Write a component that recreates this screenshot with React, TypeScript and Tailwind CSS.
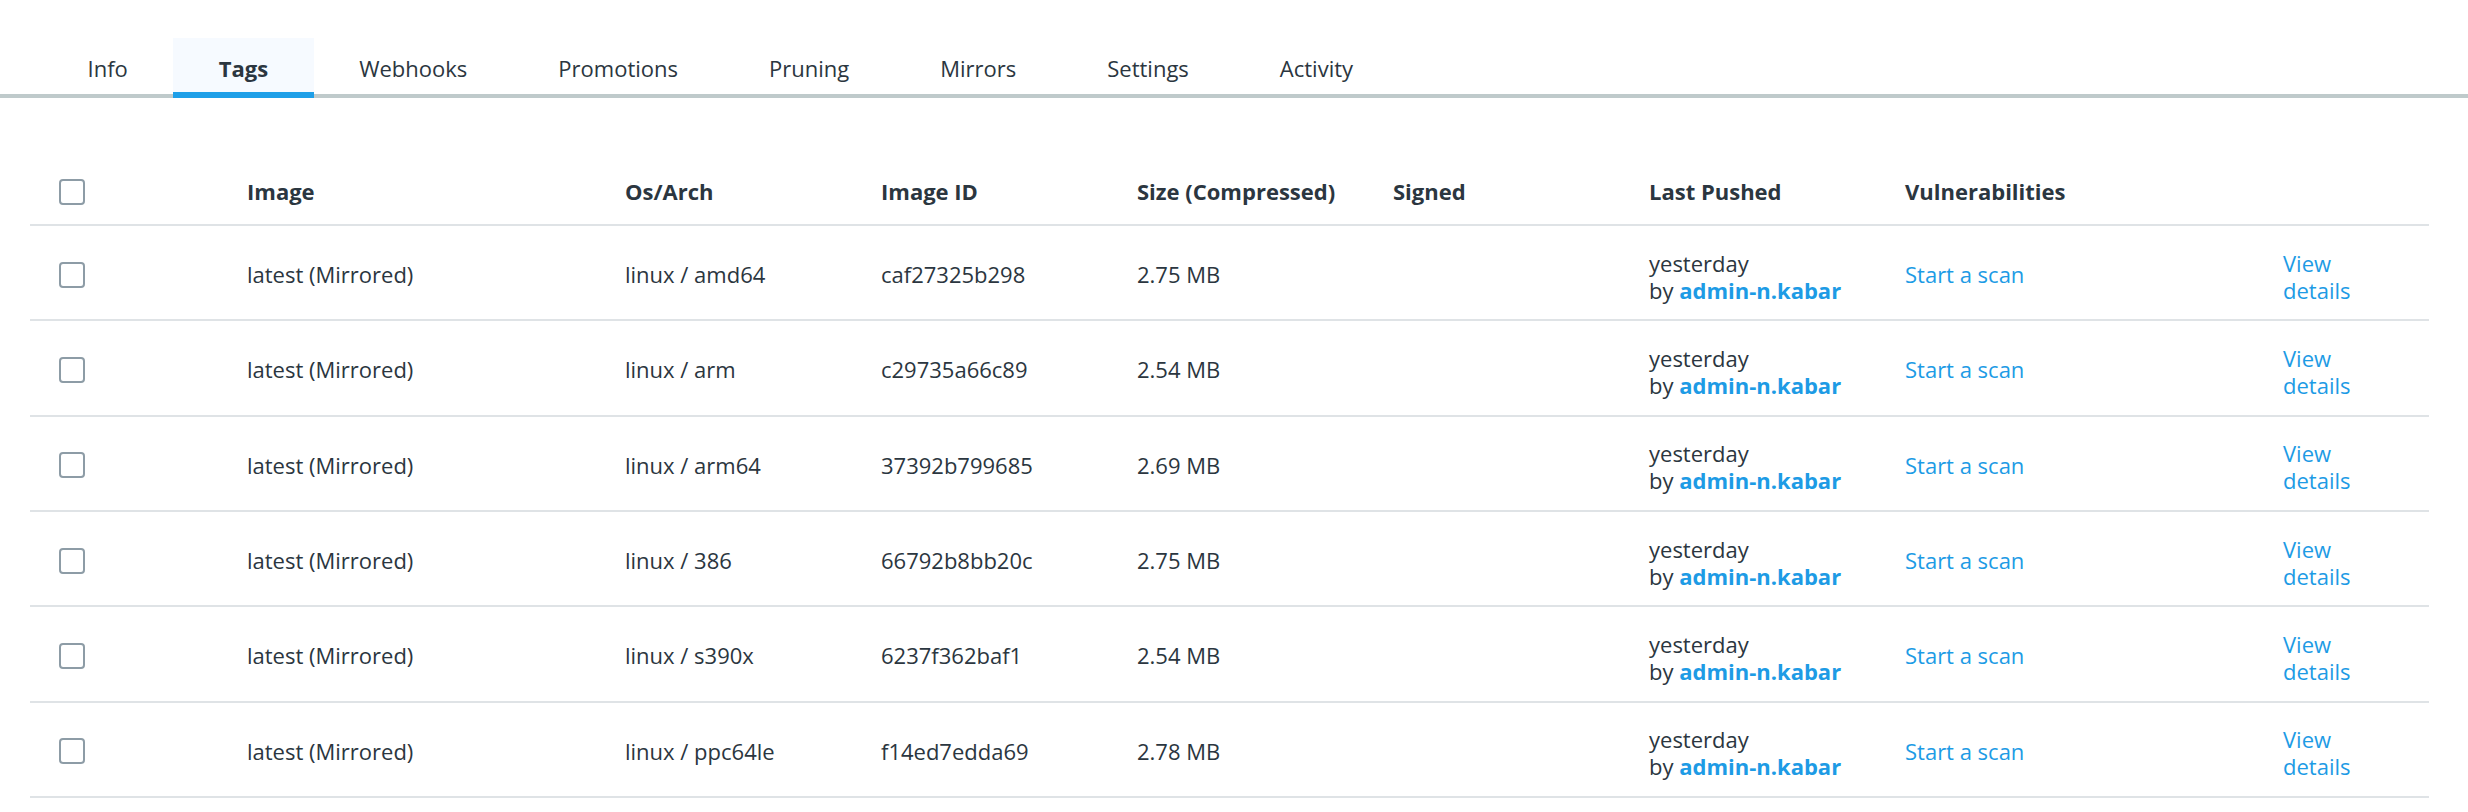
import React from "react";

const tabs = ["Info", "Tags", "Webhooks", "Promotions", "Pruning", "Mirrors", "Settings", "Activity"];

const rows = [
  ["linux / amd64", "caf27325b298", "2.75 MB"],
  ["linux / arm", "c29735a66c89", "2.54 MB"],
  ["linux / arm64", "37392b799685", "2.69 MB"],
  ["linux / 386", "66792b8bb20c", "2.75 MB"],
  ["linux / s390x", "6237f362baf1", "2.54 MB"],
  ["linux / ppc64le", "f14ed7edda69", "2.78 MB"],
];

const cols = "grid grid-cols-[217px_378px_256px_256px_256px_256px_256px_378px_1fr] items-center";

function Checkbox() {
  return <div className="w-[26px] h-[26px] rounded-[4px] border-2 border-[#8d9ca6] bg-white" />;
}

export default function App() {
  return (
    <div className="w-[2468px] h-[812px] overflow-hidden bg-white font-['Open_Sans',sans-serif] text-[22px] text-[#2b3640]">
      <div className="h-[38px]" />
      <div className="flex border-b-4 border-[#bfcacb] pl-[42px]">
        {tabs.map((t) => {
          const active = t === "Tags";
          return (
            <div
              key={t}
              className={
                active
                  ? "-mb-[4px] h-[60px] px-[45.5px] pt-[15px] leading-[30px] border-b-[6px] border-[#1e9fe8] bg-[#f6faff] font-bold"
                  : "-mb-[4px] h-[60px] px-[45.5px] pt-[15px] leading-[30px] border-b-[6px] border-transparent"
              }
            >
              {t}
            </div>
          );
        })}
      </div>
      <div className="ml-[30px] mt-[57px] w-[2399px]">
        <div className={`${cols} h-[71px] pt-[4px] border-b-2 border-[#dfe3e6] font-bold`}>
          <div className="pl-[29px]">
            <Checkbox />
          </div>
          <div>Image</div>
          <div>Os/Arch</div>
          <div>Image ID</div>
          <div>Size (Compressed)</div>
          <div>Signed</div>
          <div>Last Pushed</div>
          <div>Vulnerabilities</div>
          <div />
        </div>
        {rows.map((r, i) => (
          <div key={i} className={`${cols} h-[95.33px] pt-[4px] border-b-2 border-[#dfe3e6]`}>
            <div className="pl-[29px]">
              <Checkbox />
            </div>
            <div>latest (Mirrored)</div>
            <div>{r[0]}</div>
            <div>{r[1]}</div>
            <div>{r[2]}</div>
            <div />
            <div className="leading-[27px] pt-[4px]">
              <div>yesterday</div>
              <div>
                by <span className="font-bold text-[#1d9be5]">admin-n.kabar</span>
              </div>
            </div>
            <div className="text-[#1d9be5]">Start a scan</div>
            <div className="leading-[27px] pt-[4px] text-[#1d9be5]">
              <div>View</div>
              <div>details</div>
            </div>
          </div>
        ))}
      </div>
    </div>
  );
}
